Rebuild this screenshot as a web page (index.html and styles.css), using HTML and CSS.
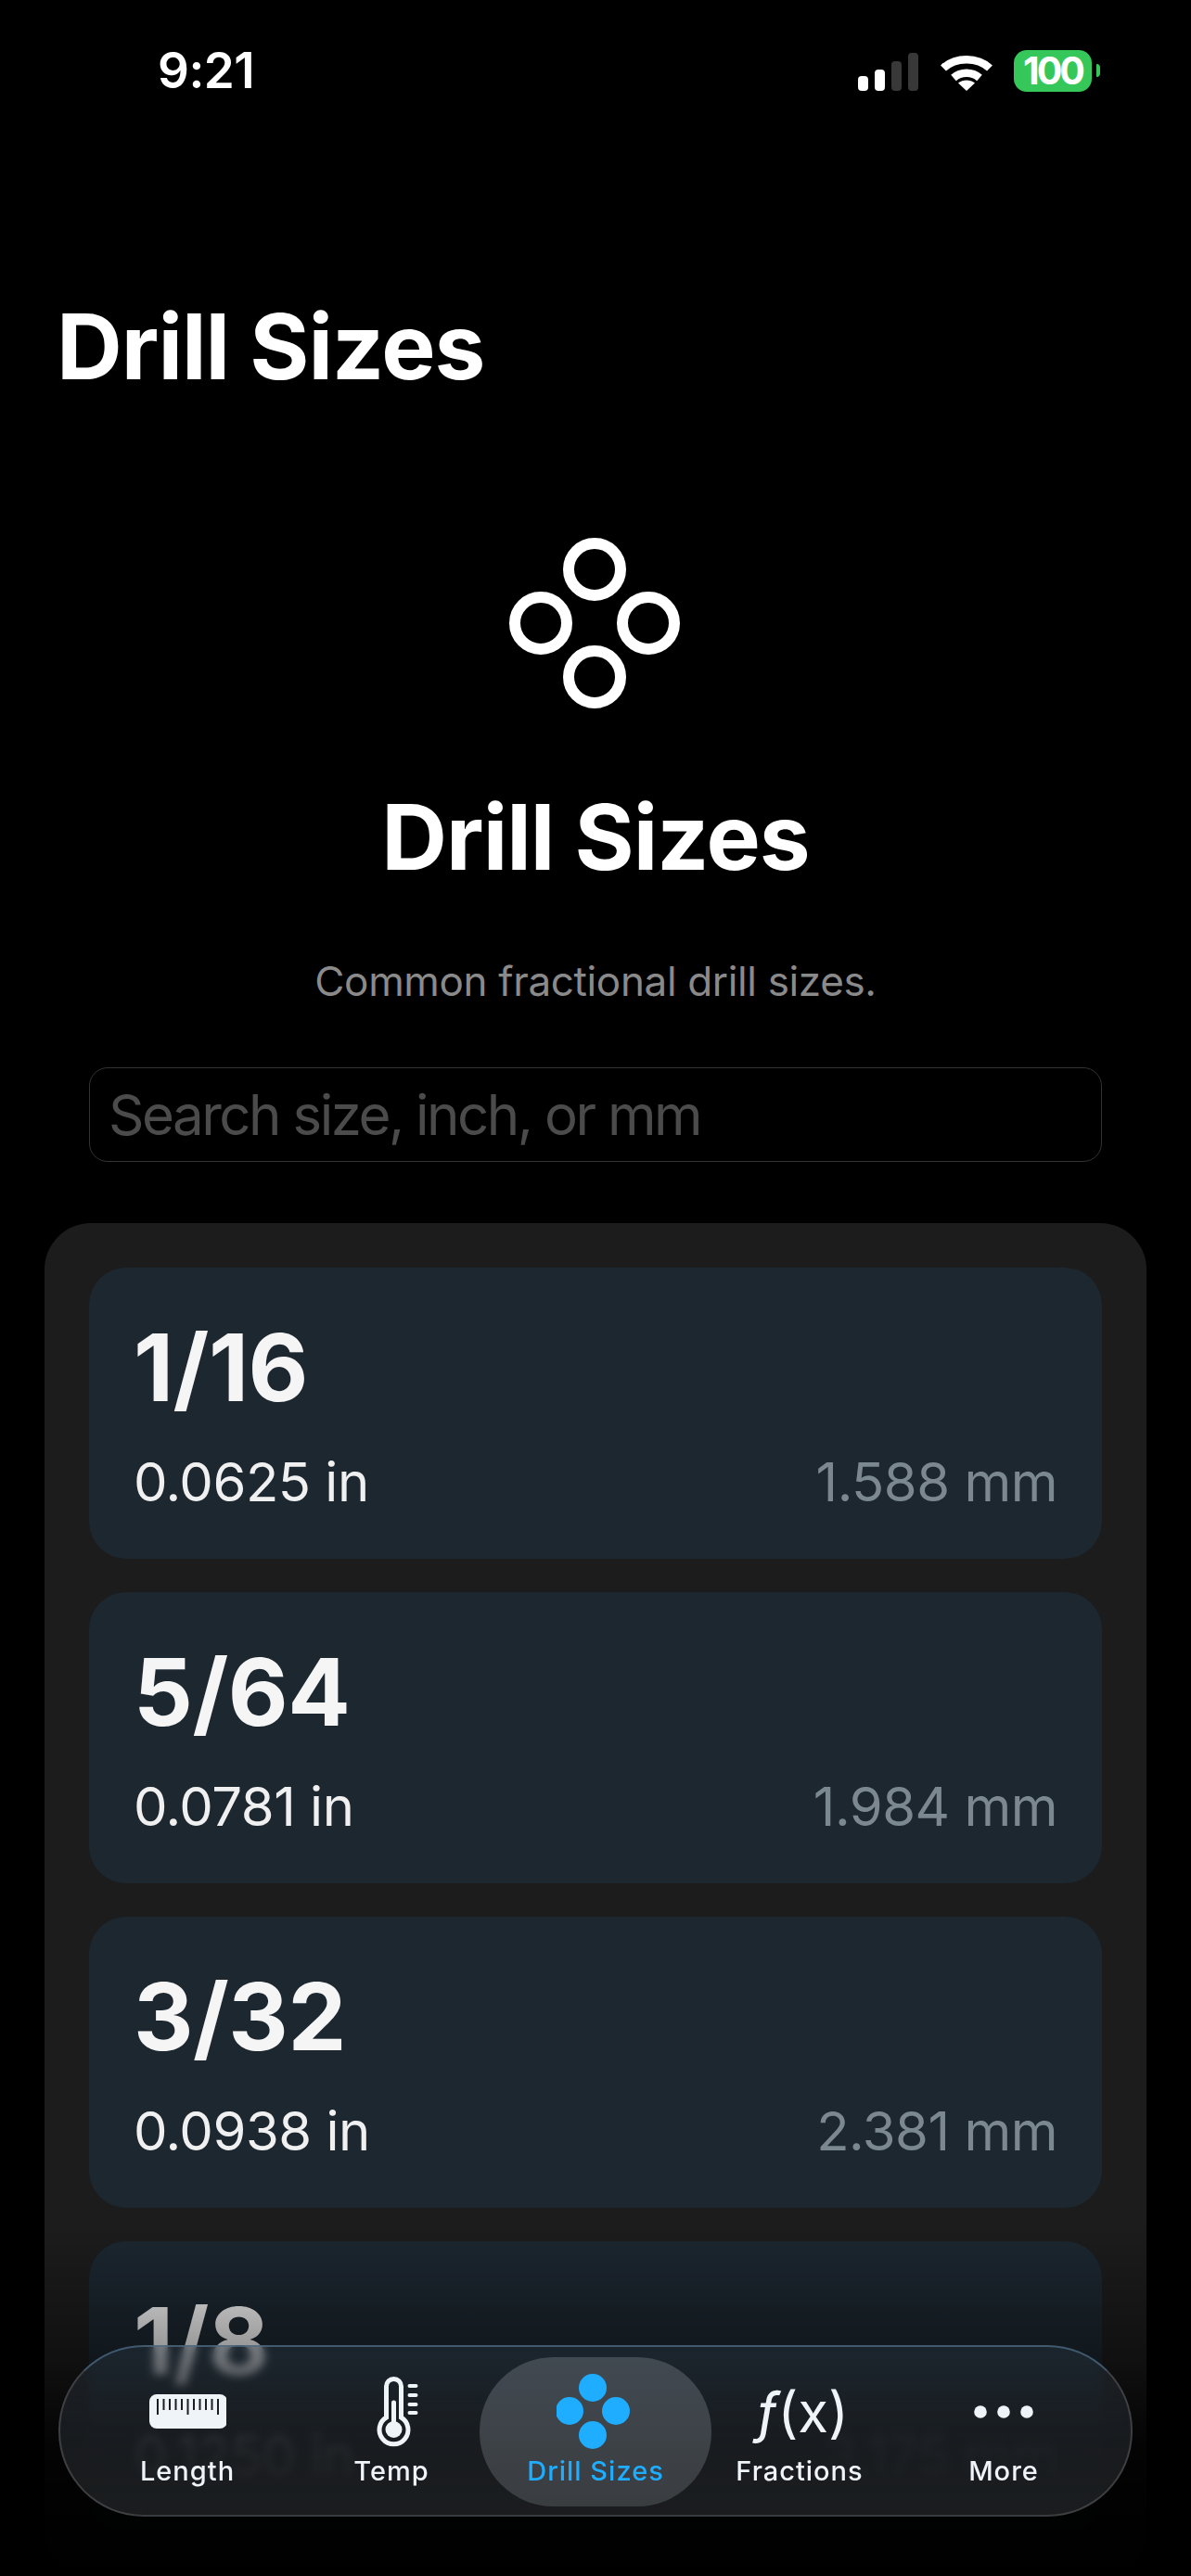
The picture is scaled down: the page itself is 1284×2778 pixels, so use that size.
FILE: index.html
```html
<!DOCTYPE html>
<html lang="en">
<head>
<meta charset="utf-8">
<title>Drill Sizes</title>
<link rel="stylesheet" href="styles.css">
</head>
<body>
<div class="screen">
  <header class="status">
    <span class="time">9:21</span>
    <div class="status-icons">
      <svg class="signal" width="66" height="41" viewBox="0 0 66 41"><rect x="0" y="25" width="11" height="16" rx="4" fill="#fff"/><rect x="18" y="18" width="11" height="23" rx="4" fill="#fff"/><rect x="36" y="9" width="11" height="32" rx="4" fill="#383838"/><rect x="54" y="0" width="11" height="41" rx="4" fill="#383838"/></svg>
      <svg class="wifi" width="58" height="42" viewBox="0 0 58 42"><path d="M4 17.500C17 5 41 5 54 17.500" fill="none" stroke="#fff" stroke-width="8.500"/><path d="M15 28C23 21 35 21 43 28" fill="none" stroke="#fff" stroke-width="8.500"/><path d="M29 42L20 33.500C25 29.500 33 29.500 38 33.500Z" fill="#fff"/></svg>
      <div class="battery"><span class="battery-level">100</span><span class="battery-cap"></span></div>
    </div>
  </header>

  <h1 class="nav-title">Drill Sizes</h1>

  <section class="hero">
    <svg class="hero-icon" width="184" height="184" viewBox="0 0 184 184"><g fill="none" stroke="#fff" stroke-width="12"><circle cx="92" cy="34" r="28"/><circle cx="34" cy="92" r="28"/><circle cx="150" cy="92" r="28"/><circle cx="92" cy="150" r="28"/></g></svg>
    <h2 class="hero-title">Drill Sizes</h2>
    <p class="hero-sub">Common fractional drill sizes.</p>
  </section>

  <div class="search">Search size, inch, or mm</div>

  <main class="panel">
    <article class="card"><div class="frac">1/16</div><div class="row"><span class="inch">0.0625 in</span><span class="mm">1.588 mm</span></div></article>
    <article class="card"><div class="frac">5/64</div><div class="row"><span class="inch">0.0781 in</span><span class="mm">1.984 mm</span></div></article>
    <article class="card"><div class="frac">3/32</div><div class="row"><span class="inch">0.0938 in</span><span class="mm">2.381 mm</span></div></article>
    <article class="card"><div class="frac">1/8</div><div class="row"><span class="inch">0.1250 in</span><span class="mm">3.175 mm</span></div></article>
  </main>

  <div class="fade"></div>

  <nav class="tabbar">
    <div class="tab">
      <svg class="tab-icon" width="84" height="84" viewBox="0 0 84 84"><rect x="1" y="23" width="84" height="37" rx="8" fill="#eff4f9"/><path d="M10 28V45M16.500 28V40M23 28V40M29.500 28V40M36 28V40M42.500 28V45M49 28V40M55.500 28V40M62 28V40M68.500 28V40M75 28V45" stroke="#1b1f23" stroke-width="2" fill="none"/></svg>
      <span class="tab-label">Length</span>
    </div>
    <div class="tab">
      <svg class="tab-icon" width="84" height="84" viewBox="0 0 84 84"><path d="M36.500 14.500A8 8 0 0 1 52.500 14.500V48A15.500 15.500 0 1 1 36.500 48Z" fill="none" stroke="#eff4f9" stroke-width="5"/><circle cx="44.500" cy="61" r="9" fill="#eff4f9"/><path d="M44.500 61V32" stroke="#eff4f9" stroke-width="5" stroke-linecap="round"/><path d="M61.500 14H68.500M61.500 24H68.500M61.500 34H68.500M61.500 43H68.500" stroke="#eff4f9" stroke-width="4" stroke-linecap="round"/></svg>
      <span class="tab-label">Temp</span>
    </div>
    <div class="tab tab-active">
      <svg class="tab-icon" width="84" height="84" viewBox="0 0 84 84"><g fill="#1fadff"><circle cx="39" cy="16" r="15"/><circle cx="14" cy="41" r="15"/><circle cx="64" cy="41" r="15"/><circle cx="39" cy="67" r="15"/></g></svg>
      <span class="tab-label">Drill Sizes</span>
    </div>
    <div class="tab">
      <span class="tab-glyph"><i class="fx-f">ƒ</i>(x)</span>
      <span class="tab-label">Fractions</span>
    </div>
    <div class="tab">
      <svg class="tab-icon" width="84" height="84" viewBox="0 0 84 84"><g fill="#eff4f9"><circle cx="17" cy="42" r="6.800"/><circle cx="42" cy="42" r="6.800"/><circle cx="67" cy="42" r="6.800"/></g></svg>
      <span class="tab-label">More</span>
    </div>
  </nav>
</div>
</body>
</html>
```
FILE: styles.css
```css
* { box-sizing: border-box; }
html, body { margin: 0; padding: 0; background: #000; }
body { font-family: "Inter", "Liberation Sans", sans-serif; color: #fff; }

.screen {
  position: relative;
  width: 1284px;
  height: 2778px;
  overflow: hidden;
  background: #000;
}

.status {
  display: flex;
  justify-content: space-between;
  align-items: center;
  height: 46px;
  margin-top: 53px;
  padding: 0 98px 0 170px;
}
.time { font-size: 53px; font-weight: 600; line-height: 46px; letter-spacing: -0.5px; }
.status-icons { display: flex; align-items: center; gap: 22px; }
.signal { margin-top: 3px; }
.wifi { margin-top: 2px; }
.battery { display: flex; align-items: center; gap: 5px; }
.battery-level {
  display: block;
  width: 84px;
  height: 45px;
  border-radius: 14px;
  background: #36c75a;
  color: #fff;
  font-size: 41px;
  font-weight: 700;
  line-height: 45px;
  letter-spacing: -3px;
  text-align: center;
}
.battery-cap {
  display: block;
  width: 4px;
  height: 14px;
  border-radius: 0 7px 7px 0;
  background: #36c75a;
}

.nav-title {
  margin: 217px 0 0 61px;
  font-size: 98px;
  line-height: 116px;
  font-weight: 700;
  letter-spacing: -1px;
}

.hero {
  display: flex;
  flex-direction: column;
  align-items: center;
  margin-top: 148px;
}
.hero-icon { display: block; margin-left: -2px; }
.hero-title {
  margin: 81px 0 0;
  font-size: 98px;
  line-height: 116px;
  font-weight: 700;
  letter-spacing: -1px;
}
.hero-sub {
  margin: 70px 0 0;
  font-size: 44px;
  line-height: 54px;
  letter-spacing: -0.35px;
  color: #8a8a8a;
}

.search {
  margin: 66px 96px 0;
  height: 102px;
  padding: 0 20px;
  border: 1px solid #333;
  border-radius: 20px;
  background: #000;
  color: #4b4b4b;
  font-size: 60px;
  line-height: 100px;
  letter-spacing: -2.500px;
}

.panel {
  margin: 66px 48px 0;
  padding: 48px;
  border-radius: 50px;
  background: #1c1c1c;
  display: flex;
  flex-direction: column;
  gap: 36px;
}
.card {
  height: 314px;
  padding: 48px 48px 0;
  border-radius: 40px;
  background: #1c2730;
}
.frac {
  font-size: 100px;
  line-height: 120px;
  font-weight: 700;
  letter-spacing: -0.500px;
  color: #f5f5f5;
}
.row {
  display: flex;
  justify-content: space-between;
  margin-top: 28px;
  font-size: 58px;
  line-height: 70px;
  letter-spacing: -0.500px;
}
.inch { color: #f0f0f0; }
.mm { color: #7c8890; }

.fade {
  position: absolute;
  left: 0;
  right: 0;
  top: 2400px;
  height: 378px;
  background: linear-gradient(to bottom, rgba(0,0,0,0) 0%, rgba(0,0,0,0.4) 37%, rgba(0,0,0,0.86) 63%, rgba(0,0,0,0.94) 79%, #000 100%);
}

.tabbar {
  position: absolute;
  left: 63px;
  top: 2529px;
  width: 1158px;
  height: 185px;
  display: grid;
  grid-template-columns: repeat(5, 220px);
  justify-content: center;
  padding: 11px 14px 9px;
  border-radius: 92px;
  border: 2px solid rgba(125,125,125,0.38);
  border-top-color: rgba(90,125,155,0.6);
  background: linear-gradient(to bottom, rgba(50,65,80,0.32), rgba(45,47,50,0.6));
  backdrop-filter: blur(5px);
}
.tab {
  display: flex;
  flex-direction: column;
  align-items: center;
  justify-content: flex-end;
  padding-bottom: 20px;
  border-radius: 80px;
  color: #eff4f9;
}
.tab-active {
  margin: 0 -15px;
  background: linear-gradient(to bottom, #414951, #3a3d40);
  color: #1fadff;
}
.tab-icon { display: block; }
.tab-label {
  font-size: 29px;
  line-height: 36px;
  font-weight: 500;
  letter-spacing: 1px;
  margin-top: 4px;
}
.tab-glyph {
  height: 84px;
  margin-left: 6px;
  font-size: 60px;
  line-height: 84px;
  color: #eff4f9;
}
.fx-f { font-style: italic; }
```
